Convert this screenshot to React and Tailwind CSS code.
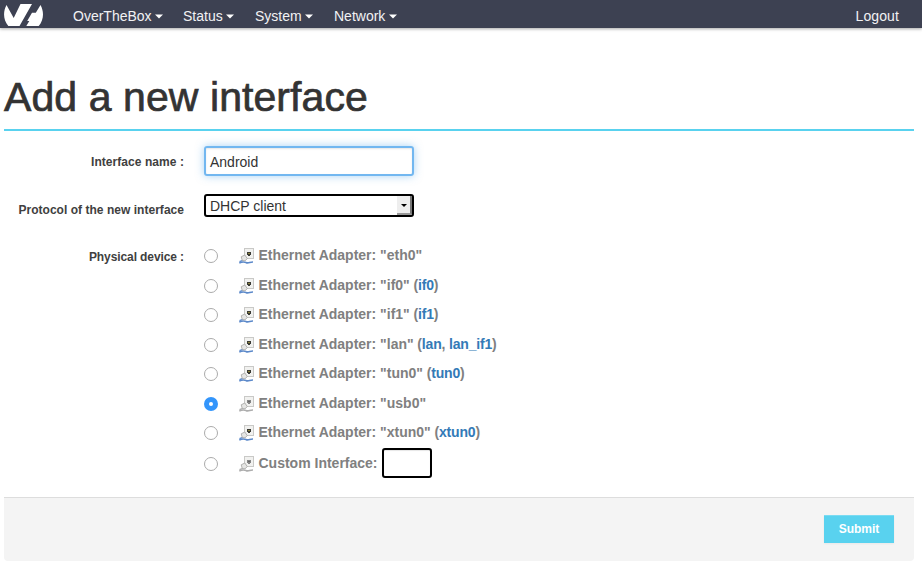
const MENUS = [
  { label: 'OverTheBox', cls: 'w-[110px]' },
  { label: 'Status', cls: 'w-[72px]' },
  { label: 'System', cls: 'w-[79px]' },
  { label: 'Network', cls: 'w-[80px]' },
];

const DEVICES = [
  { name: 'eth0', links: [], up: true, height: 'h-[30px]' },
  { name: 'if0', links: ['if0'], up: true, height: 'h-[29px]' },
  { name: 'if1', links: ['if1'], up: true, height: 'h-[30px]' },
  { name: 'lan', links: ['lan', 'lan_if1'], up: true, height: 'h-[29px]' },
  { name: 'tun0', links: ['tun0'], up: true, height: 'h-[30px]' },
  { name: 'usb0', links: [], up: false, checked: true, height: 'h-[29px]' },
  { name: 'xtun0', links: ['xtun0'], up: true, height: 'h-[30px]' },
];

function Logo() {
  return (
    <svg className="ml-1 h-[22px] w-[39px] shrink-0" viewBox="0 0 39 22" fill="#fff">
      <path d="M2.5 1 L9.7 14 L16.5 0 H28 L15.5 22 H4.3 C-1 15.5 -1 7.5 2.5 1Z" />
      <path d="M36.5 1 C40.3 8 39.8 16 34.7 22 H22.3 L25.3 17 H23.2 L28 8.8 H31.8Z" />
    </svg>
  );
}

function AdapterIcon({ up }) {
  const cable = up ? '#5c89ca' : '#adadad';
  return (
    <svg className="h-4 w-4 shrink-0" viewBox="0 0 16 16">
      <path d="M5 0H15V11H5Z" fill="#c9c9c7" />
      <path d="M6 1H14V10H6Z" fill="#f1f1ef" />
      <path d="M8 4H12V7H11V8H9V7H8Z" fill={up ? '#3a3a33' : '#858585'} />
      <path d="M9 5H11V6H9Z" fill={up ? '#8e8338' : '#666'} />
      <path d="M0.3 15 C3 13.8 5 13.6 7.2 14.6 C9.5 15.4 11 13.9 14 14" fill="none" stroke={cable} strokeWidth="1.7" />
      <path d="M0.5 13.7 L4 12.4" fill="none" stroke={cable} strokeWidth="1.3" />
      <path d="M2.2 8.8 L5.8 7 L8.3 10.6 L6 12.8 L3.3 12.5Z" fill="#e6e6e4" stroke="#aaaaa8" strokeWidth="0.9" />
    </svg>
  );
}

function Radio({ checked }) {
  return checked ? (
    <span className="flex size-[14px] shrink-0 items-center justify-center rounded-full bg-[#3395fb]">
      <span className="size-1 rounded-full bg-white" />
    </span>
  ) : (
    <span className="size-[14px] shrink-0 rounded-full border border-[#ababab] bg-white" />
  );
}

function Links({ names }) {
  return (
    <span className="tracking-[-0.18px]">
      {' ('}
      {names.map((name, i) => (
        <span key={name}>
          {i > 0 && ', '}
          <a className="text-[#337ab7]">{name}</a>
        </span>
      ))}
      )
    </span>
  );
}

export default function App() {
  return (
    <div className="h-[568px] w-[922px] overflow-hidden bg-white font-['Liberation_Sans',Arial,sans-serif] text-[#333]">
      <nav className="flex h-7 items-start bg-[#3d4152] pt-1 text-sm text-[#f2f2f4] shadow-[0_1px_3px_rgba(0,0,0,0.35)]">
        <Logo />
        <div className="ml-[30px] flex flex-1 pt-[2px]">
          {MENUS.map(({ label, cls }) => (
            <a key={label} className={`flex items-center ${cls}`}>
              {label}
              <svg className="ml-[3.5px] h-[5px] w-2" viewBox="0 0 8 5" fill="#fff">
                <path d="M0 0.5H8L4 4.5Z" />
              </svg>
            </a>
          ))}
        </div>
        <a className="mr-[23px] pt-[2px] tracking-[0.1px]">Logout</a>
      </nav>

      <main className="ml-1 mr-2">
        <h1 className="h-[103px] border-b-2 border-[#59d2ef] pt-[46px] text-[41px] leading-[46px] font-normal tracking-[0.08px] whitespace-nowrap [-webkit-text-stroke:0.7px_#333]">
          Add a new interface
        </h1>

        <div className="flex pt-[15px]">
          <label className="mr-5 w-[180px] pt-[7px] text-right text-xs leading-[18px] font-bold tracking-[0.06px] text-[#404040]">Interface name :</label>
          <div className="flex h-[30px] w-[210px] items-center rounded-[3px] border-2 border-[#72b7f0] pt-[2px] pl-1 text-sm shadow-[0_0_8px_rgba(82,168,236,0.5),inset_0_1px_2px_rgba(0,0,0,0.1)]">
            Android
          </div>
        </div>

        <div className="flex pt-[18px]">
          <label className="mr-5 w-[180px] pt-[7px] text-right text-xs leading-[18px] font-bold tracking-[0.03px] whitespace-nowrap text-[#404040]">
            Protocol of the new interface
          </label>
          <div className="flex h-[23px] w-[210px] items-center justify-between rounded-[3px] border-2 border-black pl-1 text-sm">
            DHCP client
            <span className="flex h-[19px] w-[15px] items-center justify-center border-r-2 border-b-2 border-r-[#777] border-b-[#999] bg-[#eee]">
              <svg className="mt-px h-[3px] w-[6px]" viewBox="0 0 6 3">
                <path d="M0 0H6L3 3Z" />
              </svg>
            </span>
          </div>
        </div>

        <div className="flex h-[278px] pt-[22px]">
          <label className="mr-5 w-[180px] pt-[7px] text-right text-xs leading-[18px] font-bold tracking-[-0.1px] text-[#404040]">Physical device :</label>
          <div className="text-sm leading-5 font-bold text-[#808080]">
            {DEVICES.map((device) => (
              <div key={device.name} className={`flex items-center whitespace-nowrap ${device.height}`}>
                <Radio checked={device.checked} />
                <span className="ml-[21px] flex">
                  <AdapterIcon up={device.up} />
                </span>
                <span className="ml-[3.5px] pb-[2px] whitespace-pre">
                  Ethernet Adapter: "{device.name}"{device.links.length > 0 && <Links names={device.links} />}
                </span>
              </div>
            ))}
            <div className="flex h-[31px] items-center whitespace-nowrap">
              <Radio />
              <span className="ml-[21px] flex">
                <AdapterIcon up={false} />
              </span>
              <span className="ml-[3.5px] pb-[2px]">Custom Interface:</span>
              <span className="ml-[4.5px] mb-px h-[30px] w-[50px] rounded-[3px] border-2 border-black bg-white shadow-[inset_0_1px_1px_rgba(0,0,0,0.1)]" />
            </div>
          </div>
        </div>

        <div className="flex h-16 items-start justify-end rounded-b-[4px] border-t border-[#ddd] bg-[#f4f4f4] pt-[17px] pr-5">
          <button className="h-7 w-[70px] bg-[#59d2ef] text-xs font-bold text-white shadow-[inset_0_1px_0_rgba(255,255,255,0.2),0_1px_2px_rgba(0,0,0,0.05)]">
            Submit
          </button>
        </div>
      </main>
    </div>
  );
}
